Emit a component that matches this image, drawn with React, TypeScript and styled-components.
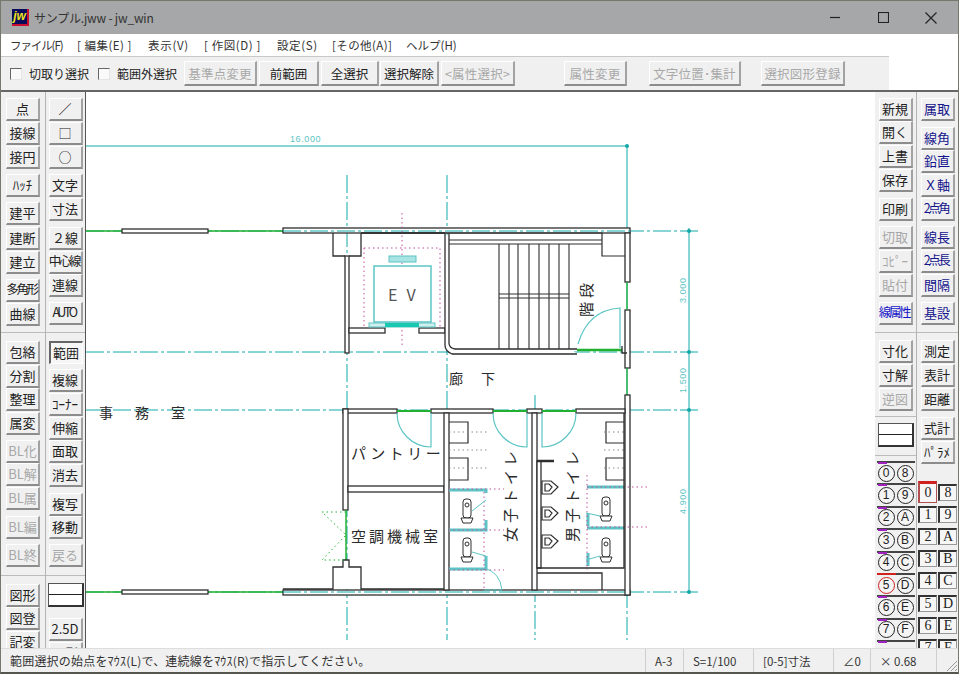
import React from "react";
import styled, { createGlobalStyle } from "styled-components";

const GlobalStyle = createGlobalStyle`
  html, body { margin: 0; padding: 0; background: #f0f0f0; }
  * { box-sizing: border-box; }
`;

const FONT = `"Noto Sans CJK JP", "Noto Sans", sans-serif`;

type Item = {
  y: number;
  label?: string;
  kind?: "rule" | "line" | "pressed";
  off?: boolean;
  tone?: string;
  tight?: boolean;
};

const leftA: Item[] = [
  { y: 98, label: "点" }, { y: 122, label: "接線" }, { y: 146, label: "接円" },
  { y: 174, label: "ﾊｯﾁ" }, { y: 202, label: "建平" }, { y: 227, label: "建断" },
  { y: 251, label: "建立" }, { y: 279, label: "多角形", tight: true }, { y: 303, label: "曲線" },
  { y: 332, kind: "rule" },
  { y: 341, label: "包絡" }, { y: 365, label: "分割" }, { y: 388, label: "整理" },
  { y: 412, label: "属変" }, { y: 440, label: "BL化", off: true }, { y: 463, label: "BL解", off: true },
  { y: 487, label: "BL属", off: true }, { y: 516, label: "BL編", off: true }, { y: 544, label: "BL終", off: true },
  { y: 575, kind: "rule" },
  { y: 584, label: "図形" }, { y: 607, label: "図登" }, { y: 631, label: "記変" },
];

const leftB: Item[] = [
  { y: 98, label: "／" }, { y: 122, label: "□" }, { y: 146, label: "○" },
  { y: 174, label: "文字" }, { y: 198, label: "寸法" }, { y: 227, label: "２線" },
  { y: 251, label: "中心線", tight: true }, { y: 274, label: "連線" }, { y: 302, label: "AUTO", tight: true },
  { y: 332, kind: "rule" },
  { y: 341, label: "範囲", kind: "pressed" }, { y: 369, label: "複線" }, { y: 393, label: "ｺｰﾅｰ" },
  { y: 417, label: "伸縮" }, { y: 440, label: "面取" }, { y: 464, label: "消去" },
  { y: 493, label: "複写" }, { y: 516, label: "移動" }, { y: 544, label: "戻る", off: true },
  { y: 575, kind: "rule" },
  { y: 583, kind: "line" }, { y: 618, label: "2.5D" }, { y: 642, label: "日影" },
];

const rightA: Item[] = [
  { y: 98, label: "新規" }, { y: 121, label: "開く" }, { y: 145, label: "上書" }, { y: 169, label: "保存" },
  { y: 198, label: "印刷" }, { y: 226, label: "切取", off: true }, { y: 250, label: "ｺﾋﾟｰ", off: true },
  { y: 274, label: "貼付", off: true }, { y: 302, label: "線属性", tone: "#1414c8", tight: true },
  { y: 332, kind: "rule" },
  { y: 340, label: "寸化" }, { y: 364, label: "寸解" }, { y: 388, label: "逆図", off: true },
  { y: 416, kind: "rule" },
  { y: 423, kind: "line" },
  { y: 455, kind: "rule" },
];

const NAVY = "#14148c";
const rightB: Item[] = [
  { y: 98, label: "属取", tone: NAVY }, { y: 127, label: "線角", tone: NAVY }, { y: 150, label: "鉛直", tone: NAVY },
  { y: 174, label: "Ｘ軸", tone: NAVY }, { y: 198, label: "2点角", tone: NAVY, tight: true },
  { y: 226, label: "線長", tone: NAVY }, { y: 250, label: "2点長", tone: NAVY, tight: true },
  { y: 274, label: "間隔", tone: NAVY }, { y: 302, label: "基設", tone: NAVY },
  { y: 332, kind: "rule" },
  { y: 340, label: "測定" }, { y: 364, label: "表計" }, { y: 388, label: "距離" },
  { y: 417, label: "式計" }, { y: 441, label: "ﾊﾟﾗﾒ" },
];

const circleKeys = ["0", "8", "1", "9", "2", "A", "3", "B", "4", "C", "5", "D", "6", "E", "7", "F", "", ""];
const plainKeys = ["0", "8", "1", "9", "2", "A", "3", "B", "4", "C", "5", "D", "6", "E", "7", "F"];

const Page = styled.div`
  width: 959px;
  height: 674px;
  display: flex;
  flex-direction: column;
  overflow: hidden;
  background: #f0f0f0;
  font-family: ${FONT};
  color: #222;
  border-left: 1px solid #77786c;
  border-right: 1px solid #77786c;
  border-top: 1px solid #77786c;
  border-bottom: 2px solid #55564e;
`;

const TitleBar = styled.header`
  height: 33px;
  flex: none;
  display: flex;
  align-items: center;
  background: #a6a7a8;
  padding-left: 11px;
`;

const Logo = styled.div`
  width: 17px;
  height: 17px;
  background: #0a0a5a;
  border-right: 2px solid #c8102e;
  border-bottom: 2px solid #c8102e;
  color: #f2e21c;
  font: italic 700 12px/14px "Liberation Sans", sans-serif;
  text-align: center;
`;

const Title = styled.div`
  margin-left: 5px;
  font-size: 12px;
  letter-spacing: -0.2px;
  color: #333;
  flex: 1;
`;

const WinButton = styled.div`
  width: 48px;
  height: 33px;
  display: flex;
  align-items: center;
  justify-content: center;
  &:last-child { margin-right: 3px; }
`;

const Menu = styled.nav`
  height: 22px;
  flex: none;
  display: flex;
  align-items: center;
  background: #fff;
  padding-left: 9px;
  font-size: 11.5px;
  color: #333;
`;

const MenuItem = styled.span<{ $w: number; $sp?: number }>`
  width: ${(p) => p.$w}px;
  letter-spacing: ${(p) => p.$sp ?? 0}px;
  white-space: nowrap;
`;

const ToolRow = styled.div`
  height: 34px;
  flex: none;
  display: flex;
  background: #fff;
`;

const Toolbar = styled.div`
  width: 888px;
  display: flex;
  align-items: center;
  background: #f0f0f0;
  border-top: 1px solid #c8c8c8;
  padding-left: 9px;
  font-size: 12.5px;
`;

const Check = styled.span`
  width: 12px;
  height: 12px;
  background: #fafafa;
  border-top: 1px solid #666;
  border-left: 1px solid #666;
  border-right: 1px solid #e4e4e4;
  border-bottom: 1px solid #e4e4e4;
  margin-right: 7px;
`;

const CheckLabel = styled.span<{ $w: number }>`
  width: ${(p) => p.$w}px;
  font-size: 12px;
  white-space: nowrap;
  color: #222;
`;

const Raised = styled.div<{ $off?: boolean; $tone?: string }>`
  display: flex;
  align-items: center;
  justify-content: center;
  flex: none;
  white-space: nowrap;
  background: #f0f0f0;
  color: ${(p) => (p.$off ? "#a8a8a8" : p.$tone || "#222")};
  border-top: 1px solid #fff;
  border-left: 1px solid #fff;
  border-right: 2px solid #a2a2a2;
  border-bottom: 2px solid #8c8c8c;
`;

const ToolButton = styled(Raised)<{ $w: number; $ml?: number }>`
  width: ${(p) => p.$w}px;
  height: 25px;
  margin-left: ${(p) => p.$ml ?? 2}px;
  font-size: 12.5px;
  letter-spacing: ${(p) => (p.$off ? "0.2px" : "0")};
`;

const Main = styled.div`
  flex: 1;
  min-height: 0;
  display: flex;
  overflow: hidden;
  border-top: 2px solid #666;
`;

const Side = styled.aside<{ $w: number }>`
  width: ${(p) => p.$w}px;
  flex: none;
  height: 100%;
  display: flex;
  overflow: hidden;
  background: #f0f0f0;
`;

const SideColumn = styled.div<{ $w: number; $line?: boolean }>`
  width: ${(p) => p.$w}px;
  flex: none;
  display: flex;
  flex-direction: column;
  align-items: center;
  height: 100%;
  ${(p) => (p.$line ? "border-right: 1px solid #b4b4b4;" : "")}
`;

const SideButton = styled(Raised)<{ $gap: number; $tight?: boolean; $pressed?: boolean }>`
  width: 34px;
  height: 23px;
  margin-top: ${(p) => p.$gap}px;
  padding-bottom: 2px;
  font-size: 13px;
  line-height: 1;
  ${(p) => (p.$tight ? "letter-spacing: -2.4px; font-size: 12.5px; padding-right: 2px;" : "")}
  ${(p) =>
    p.$pressed
      ? "border: 1px solid #fff; border-top: 2px solid #666; border-left: 2px solid #666; background: #f6f6f6;"
      : ""}
`;

const Rule = styled.div<{ $gap: number }>`
  align-self: stretch;
  height: 1px;
  flex: none;
  margin-top: ${(p) => p.$gap}px;
  background: #bcbcbc;
`;

const LineBox = styled.div<{ $gap: number }>`
  width: 36px;
  height: 24px;
  flex: none;
  margin-top: ${(p) => p.$gap}px;
  background: #fff;
  border: 1px solid #555;
  border-right: 2px solid #333;
  border-bottom: 2px solid #333;
  display: flex;
  align-items: center;
  &::before {
    content: "";
    width: 100%;
    height: 1.5px;
    background: #222;
  }
`;

const CircleGrid = styled.div`
  display: grid;
  grid-template-columns: 19px 19px;
  grid-auto-rows: 22.4px;
  margin-top: 5px;
  column-gap: 0;
`;

const CircleCell = styled.div<{ $active?: boolean; $mark?: boolean }>`
  position: relative;
  display: flex;
  align-items: center;
  justify-content: center;
  border-top: 2px solid ${(p) => (p.$active ? "#d02020" : "#444")};
  &::before {
    content: "";
    display: ${(p) => (p.$mark ? "block" : "none")};
    position: absolute;
    left: 1px;
    top: -1px;
    width: 9px;
    height: 2px;
    background: #a020c0;
  }
`;

const Circle = styled.span<{ $active?: boolean }>`
  width: 17px;
  height: 17px;
  border-radius: 50%;
  border: 1px solid ${(p) => (p.$active ? "#d02020" : "#222")};
  font-size: 12px;
  line-height: 15px;
  text-align: center;
  font-family: "Liberation Sans", sans-serif;
  color: #222;
  background: #f4f4f4;
`;

const KeyGrid = styled.div`
  display: grid;
  grid-template-columns: 19px 19px;
  grid-auto-rows: 22.2px;
  column-gap: 1px;
  margin-top: 17px;
  justify-items: center;
  align-items: center;
`;

const Key = styled.div<{ $active?: boolean }>`
  width: 19px;
  height: ${(p) => (p.$active ? 22 : 17)}px;
  display: flex;
  align-items: center;
  justify-content: center;
  background: #f6f6f6;
  border-top: ${(p) => (p.$active ? "3px solid #d02020" : "2px solid #333")};
  border-left: 2px solid ${(p) => (p.$active ? "#b05050" : "#333")};
  border-right: 1px solid ${(p) => (p.$active ? "#b05050" : "#999")};
  border-bottom: 1px solid ${(p) => (p.$active ? "#b05050" : "#999")};
  font: 14px/1 "Liberation Serif", serif;
  color: #222;
`;

const Canvas = styled.main`
  flex: 1;
  min-width: 0;
  background: #fff;
  border-left: 1px solid #555;
  overflow: hidden;
  svg { display: block; }
`;

const Status = styled.footer`
  height: 24px;
  flex: none;
  display: flex;
  align-items: center;
  background: #f0f0f0;
  font-size: 11.5px;
  color: #333;
  border-top: 1px solid #ddd;
`;

const StatusCell = styled.div<{ $w: number; $sp?: number; $size?: number }>`
  width: ${(p) => p.$w}px;
  height: 100%;
  flex: none;
  display: flex;
  align-items: center;
  padding-left: 9px;
  white-space: nowrap;
  font-size: ${(p) => p.$size ?? 11.5}px;
  letter-spacing: ${(p) => p.$sp ?? 0}px;
  border-right: 1px solid #cfcfcf;
`;

const Grip = styled.div`
  flex: 1;
  display: flex;
  align-items: flex-end;
  justify-content: flex-end;
  height: 100%;
`;

// left/right side column from a list of top coordinates
const SideStack: React.FC<{ items: Item[] }> = ({ items }) => {
  let bottom = 92;
  return (
    <>
      {items.map((it, i) => {
        const gap = it.y - bottom;
        if (it.kind === "rule") {
          bottom = it.y + 1;
          return <Rule key={i} $gap={gap} />;
        }
        if (it.kind === "line") {
          bottom = it.y + 24;
          return <LineBox key={i} $gap={gap} />;
        }
        bottom = it.y + 23;
        return (
          <SideButton
            key={i}
            $gap={gap}
            $off={it.off}
            $tone={it.tone}
            $tight={it.tight}
            $pressed={it.kind === "pressed"}
          >
            {it.label}
          </SideButton>
        );
      })}
    </>
  );
};

const WALL = "#2e2e2e";
const CYAN = "#12a8a8";
const TEAL = "#5cc4c4";
const GREEN = "#22b030";
const PINK = "#c050a0";
const GRAY = "#8a8a8a";

const Wall: React.FC<{ x: number; y: number; w: number; h: number }> = ({ x, y, w, h }) => (
  <rect x={x} y={y} width={w} height={h} fill="#fff" stroke={WALL} strokeWidth={1.3} />
);

const Wc: React.FC<{ x: number; y: number }> = ({ x, y }) => (
  <g fill="#fff" stroke={WALL} strokeWidth={1}>
    <rect x={x + 2} y={y} width={8} height={19} rx={3} />
    <circle cx={x + 6} cy={y + 6} r={2} />
    <path d={`M${x} ${y + 19} h12 l-2 5 h-8 z`} />
  </g>
);

const Urinal: React.FC<{ y: number }> = ({ y }) => (
  <g fill="#fff" stroke={WALL} strokeWidth={1.2}>
    <path d={`M542 ${y} h9 l7 6 l-7 7 h-9 z`} />
    <path d={`M545 ${y + 3} h4 l3 3 l-3 4 h-4 z`} />
  </g>
);

const Dotted: React.FC<{ d: string; color?: string }> = ({ d, color = GRAY }) => (
  <path d={d} fill="none" stroke={color} strokeWidth={1} strokeDasharray="1.5 3" />
);

const Chain: React.FC<{ d: string }> = ({ d }) => (
  <path d={d} fill="none" stroke={CYAN} strokeWidth={1} strokeDasharray="18 3 3 3" />
);

const Label: React.FC<{ x: number; y: number; size?: number; sp?: number; rot?: boolean; fill?: string; children: string }> = ({
  x, y, size = 14, sp = 0, rot, fill = "#2b2b2b", children,
}) => (
  <text
    x={x}
    y={y}
    fontSize={size}
    letterSpacing={sp}
    fill={fill}
    fontFamily={FONT}
    transform={rot ? `rotate(-90 ${x} ${y})` : undefined}
  >
    {children}
  </text>
);

const DimText: React.FC<{ x: number; y: number; rot?: boolean; children: string }> = ({ x, y, rot, children }) => (
  <text
    x={x}
    y={y}
    fontSize={9}
    letterSpacing={0.6}
    fill={TEAL}
    fontFamily='"Liberation Sans", sans-serif'
    transform={rot ? `rotate(-90 ${x} ${y})` : undefined}
  >
    {children}
  </text>
);

const Plan: React.FC = () => (
  <svg width="100%" height="100%" viewBox="86 92 789 556">
    {/* grid and dimensions */}
    <path d="M86 146H627V235M689 228V592M627 235V592" fill="none" stroke={CYAN} strokeWidth={1} />
    <Chain d="M347 175V640M447 175V640M535 395V640M627 590V640M86 231H700M86 352H700M86 410H700M86 592H700" />
    {[[627, 146], [689, 231], [689, 352], [689, 410], [689, 592], [627, 231], [627, 352], [627, 410], [627, 592]].map(([cx, cy]) => (
      <circle key={`${cx}-${cy}`} cx={cx} cy={cy} r={2} fill={CYAN} />
    ))}
    <DimText x={290} y={142}>16.000</DimText>
    <DimText x={686} y={303} rot>3.000</DimText>
    <DimText x={686} y={393} rot>1.500</DimText>
    <DimText x={686} y={514} rot>4.900</DimText>

    {/* upper and lower outer walls */}
    <path d="M86 231H122M208 231H283M86 592H122M208 592H283" stroke={GREEN} strokeWidth={1.5} />
    <Wall x={122} y={229} w={86} h={4} />
    <Wall x={283} y={228} w={347} h={5} />
    <Wall x={122} y={590} w={86} h={4} />
    <Wall x={283} y={590} w={347} h={5} />
    <Chain d="M283 231H630M283 592H630" />

    {/* elevator shaft */}
    <path d="M333 233V256H345M361 233V256H349M361 233H445" fill="none" stroke={WALL} strokeWidth={1.3} />
    <Wall x={345} y={256} w={4} h={97} />
    <Wall x={349} y={328} w={36} h={5} />
    <Wall x={419} y={328} w={26} h={5} />
    <Dotted d="M364 248H440V327M364 248V327" color={PINK} />
    <Dotted d="M402 213V347" color={PINK} />
    <rect x={374} y={266} width={57} height={56} fill="#fff" stroke={TEAL} strokeWidth={1.5} />
    <rect x={389} y={256} width={27} height={6} fill="#a8e4e4" stroke={TEAL} />
    <rect x={369} y={323} width={66} height={4} fill="#d0f0f0" stroke={TEAL} />
    <rect x={385} y={323} width={34} height={4} fill="#18c8b0" />
    <Label x={388} y={301} size={16} sp={9} fill="#555">EV</Label>

    {/* stairs */}
    <path d="M445 233V345Q445 351 452 354H577M449 233V343Q449 348 455 349H577" fill="#fff" stroke={WALL} strokeWidth={1.3} />
    <path d="M361 233H602V256H625M449 240H602M449 244H602M499 294H569M499 298H569" fill="none" stroke={WALL} strokeWidth={1.2} />
    <path d="M499 244V349M509 244V349M518 244V349M529 244V349M539 244V349M549 244V349M559 244V349M569 244V349" stroke={WALL} strokeWidth={1.1} />
    <Wall x={625} y={233} w={5} h={49} />
    <Wall x={625} y={310} w={5} h={58} />
    <path d="M627 282V310M627 368V395" stroke={GREEN} strokeWidth={1.2} />
    <path d="M577 350H622" stroke={GREEN} strokeWidth={2.5} />
    <path d="M622 346V353H627" fill="none" stroke={WALL} strokeWidth={1.3} />
    <path d="M578 344Q588 310 620 308V348" fill="none" stroke={TEAL} strokeWidth={1.2} />
    <Label x={592} y={317} size={15} sp={4} rot>階段</Label>

    <Label x={449} y={384} size={14}>廊</Label>
    <Label x={481} y={384} size={14}>下</Label>
    <Label x={99} y={418} size={14} sp={22}>事務室</Label>

    {/* lower block walls */}
    <Wall x={625} y={395} w={5} h={200} />
    <Wall x={343} y={409} w={54} h={4} />
    <Wall x={431} y={409} w={62} h={4} />
    <Wall x={527} y={409} w={15} h={4} />
    <Wall x={576} y={409} w={49} h={4} />
    <path d="M397 411H431M493 411H527M542 411H576" stroke={GREEN} strokeWidth={1.8} />
    <Wall x={343} y={409} w={5} h={101} />
    <Wall x={348} y={486} w={96} h={6} />
    <Wall x={444} y={413} w={5} h={177} />
    <Wall x={532} y={413} w={5} h={177} />
    <path d="M346 510V560" stroke={GREEN} strokeWidth={1.5} />
    <path d="M283 589H333V567H343V560H349V567H361V589H444" fill="#fff" stroke={WALL} strokeWidth={1.3} />
    <path d="M397 413A34 34 0 0 0 431 447V413M493 413A34 34 0 0 0 527 447V413M576 413A34 34 0 0 1 542 447V413" fill="none" stroke={TEAL} strokeWidth={1.2} />
    <Dotted d="M346 512H322L346 535L322 560H346" color={GREEN} />

    {/* booths */}
    <path d="M449 422H468V443H449M449 458H468V480H449M624 422H606V443H624M624 458H606V480H624" fill="none" stroke={WALL} strokeWidth={1.2} />
    <Dotted d="M449 432H489M449 450H489M449 468H489M604 432H624M604 450H624M604 468H624" />
    <path d="M449 490H486V493M449 530H486V520M449 569H486V556" fill="none" stroke={TEAL} strokeWidth={3} />
    <path d="M587 487H624M587 528H624M588 526V513M588 566V553" fill="none" stroke={TEAL} strokeWidth={3} />
    <Dotted d="M484 492V590M449 489H504M449 530H504M449 570H504M587 475V570M587 487H650M587 527H650" color={PINK} />
    <Wc x={461} y={499} />
    <Wc x={461} y={538} />
    <Wc x={600} y={497} />
    <Wc x={600} y={538} />
    <path d="M472 511L486 500M472 552L486 556M600 516L586 513M600 556L586 560" stroke={TEAL} />
    <path d="M484 568Q500 572 502 590H484" fill="none" stroke={TEAL} />
    <Wall x={537} y={461} w={4} h={107} />
    <path d="M537 461H554" stroke={WALL} strokeWidth={2.5} />
    <Urinal y={481} />
    <Urinal y={507} />
    <Urinal y={535} />
    <path d="M537 568H624V413M537 573H602V590" fill="none" stroke={WALL} strokeWidth={1.3} />

    <Label x={351} y={459} size={15} sp={3.5}>パントリー</Label>
    <Label x={351} y={542} size={15} sp={3}>空調機械室</Label>
    <Label x={516} y={542} size={15} sp={4} rot>女子トイレ</Label>
    <Label x={578} y={542} size={15} sp={4} rot>男子トイレ</Label>
  </svg>
);

const App: React.FC = () => (
  <Page>
    <GlobalStyle />
    <TitleBar>
      <Logo>jw</Logo>
      <Title>サンプル.jww - jw_win</Title>
      <WinButton>
        <svg width="11" height="11" viewBox="0 0 11 11"><path d="M0 5.5H10" stroke="#222" strokeWidth="1.2" /></svg>
      </WinButton>
      <WinButton>
        <svg width="11" height="11" viewBox="0 0 11 11"><rect x="0.5" y="0.5" width="10" height="10" fill="none" stroke="#222" strokeWidth="1.1" /></svg>
      </WinButton>
      <WinButton>
        <svg width="12" height="12" viewBox="0 0 12 12"><path d="M0.5 0.5L11.5 11.5M11.5 0.5L0.5 11.5" stroke="#222" strokeWidth="1.2" /></svg>
      </WinButton>
    </TitleBar>
    <Menu>
      <MenuItem $w={67} $sp={-1.1}>ファイル(F)</MenuItem>
      <MenuItem $w={71} $sp={0.5}>[ 編集(E) ]</MenuItem>
      <MenuItem $w={56} $sp={0.7}>表示(V)</MenuItem>
      <MenuItem $w={73} $sp={0.6}>[ 作図(D) ]</MenuItem>
      <MenuItem $w={55} $sp={0.6}>設定(S)</MenuItem>
      <MenuItem $w={74} $sp={0.4}>[その他(A)]</MenuItem>
      <MenuItem $w={60}>ヘルプ(H)</MenuItem>
    </Menu>
    <ToolRow>
      <Toolbar>
        <Check />
        <CheckLabel $w={69}>切取り選択</CheckLabel>
        <Check />
        <CheckLabel $w={67}>範囲外選択</CheckLabel>
        <ToolButton $w={73} $ml={0} $off>基準点変更</ToolButton>
        <ToolButton $w={60}>前範囲</ToolButton>
        <ToolButton $w={58}>全選択</ToolButton>
        <ToolButton $w={59} $ml={1}>選択解除</ToolButton>
        <ToolButton $w={74} $off>&lt;属性選択&gt;</ToolButton>
        <ToolButton $w={63} $ml={49} $off>属性変更</ToolButton>
        <ToolButton $w={92} $ml={22} $off>文字位置･集計</ToolButton>
        <ToolButton $w={84} $ml={20} $off>選択図形登録</ToolButton>
      </Toolbar>
    </ToolRow>
    <Main>
      <Side $w={84}>
        <SideColumn $w={45} $line>
          <SideStack items={leftA} />
        </SideColumn>
        <SideColumn $w={39}>
          <SideStack items={leftB} />
        </SideColumn>
      </Side>
      <Canvas>
        <Plan />
      </Canvas>
      <Side $w={83}>
        <SideColumn $w={42} $line>
          <SideStack items={rightA} />
          <CircleGrid>
            {circleKeys.map((k, i) => (
              <CircleCell key={i} $active={k === "5"} $mark={i % 2 === 0 && k !== "5"}>
                {k && <Circle $active={k === "5"}>{k}</Circle>}
              </CircleCell>
            ))}
          </CircleGrid>
        </SideColumn>
        <SideColumn $w={41}>
          <SideStack items={rightB} />
          <KeyGrid>
            {plainKeys.map((k, i) => (
              <Key key={i} $active={i === 0}>{k}</Key>
            ))}
          </KeyGrid>
        </SideColumn>
      </Side>
    </Main>
    <Status>
      <StatusCell $w={645} $size={12} $sp={0.2}>範囲選択の始点をﾏｳｽ(L)で、連続線をﾏｳｽ(R)で指示してください。</StatusCell>
      <StatusCell $w={38}>A-3</StatusCell>
      <StatusCell $w={70}>S=1/100</StatusCell>
      <StatusCell $w={80}>[0-5]寸法</StatusCell>
      <StatusCell $w={37}>∠0</StatusCell>
      <StatusCell $w={66}>× 0.68</StatusCell>
      <Grip>
        <svg width="13" height="13" viewBox="0 0 13 13"><path d="M2 12L12 2M6 12L12 6M10 12L12 10" stroke="#9a9a9a" /></svg>
      </Grip>
    </Status>
  </Page>
);

export default App;
